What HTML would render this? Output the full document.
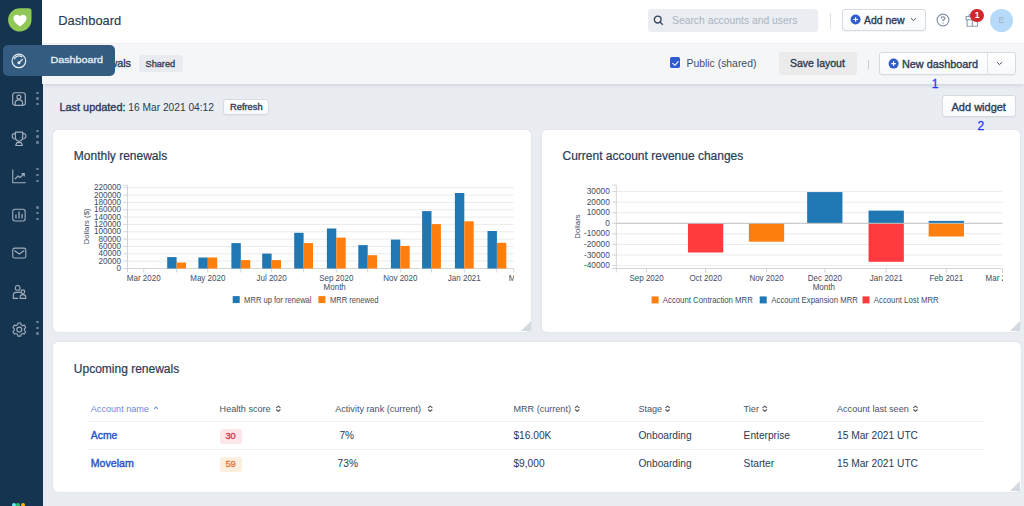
<!DOCTYPE html>
<html><head><meta charset="utf-8">
<style>
*{box-sizing:border-box;margin:0;padding:0}
html,body{width:1024px;height:506px;overflow:hidden;background:#e9ecf1;font-family:"Liberation Sans",sans-serif;color:#2d3b55}
.a{position:absolute;white-space:nowrap}
.sb{-webkit-text-stroke:0.35px currentColor}
#side{position:absolute;left:0;top:0;width:42.5px;height:506px;background:#15344f}
#hdr{position:absolute;left:42px;top:0;width:982px;height:43px;background:#fff}
#sub{position:absolute;left:42px;top:42.5px;width:982px;height:41px;background:#f5f6f8;border-top:1px solid #eef0f3;box-shadow:0 2px 4px -1px rgba(30,50,80,.16)}
.card{position:absolute;background:#fff;border-radius:5px;box-shadow:0 0 2px rgba(30,50,80,.10)}
.btn{position:absolute;background:linear-gradient(#fff,#f8f9fb);border:1px solid #d6dbe2;border-radius:3px;box-shadow:0 1px 1px rgba(0,0,0,.04)}
.dots{position:absolute;left:36.5px;width:2px}
.dots i{position:absolute;left:-0.2px;width:2.4px;height:2.4px;border-radius:50%;background:#6a7d93}
.ic{position:absolute}
.handle{position:absolute;width:0;height:0;border-style:solid;border-width:0 0 10.4px 10.4px;border-color:transparent transparent #d3d9e1 transparent}
</style></head>
<body>
<!-- sidebar -->
<div id="side">
  <svg class="ic" style="left:7.5px;top:8px" width="24" height="24" viewBox="0 0 24 24">
    <path d="M11.8 0.2H20.8Q23.5 0.2 23.5 2.9V11.8A11.7 11.7 0 1 1 11.8 0.2Z" fill="#90c858"/>
    <path d="M11.95 18.5C7.6 15.3 5.4 13.1 5.4 10.3C5.4 8.2 6.9 6.8 8.9 6.8C10.2 6.8 11.3 7.5 11.95 8.6C12.6 7.5 13.7 6.8 15 6.8C17 6.8 18.5 8.2 18.5 10.3C18.5 13.1 16.3 15.3 11.95 18.5Z" fill="#fff"/>
  </svg>
  <!-- contact -->
  <svg class="ic" style="left:12px;top:92px" width="14" height="14" viewBox="0 0 14 14" fill="none" stroke="#a3afbd" stroke-width="1.15">
    <rect x="0.7" y="0.7" width="12.6" height="12.6" rx="2.2"/>
    <circle cx="6.9" cy="5.1" r="2"/>
    <path d="M3.2 13.2V11.3Q3.2 7.9 6.9 7.9Q10.6 7.9 10.6 11.3V13.2"/>
  </svg>
  <div class="dots" style="top:91.5px"><i style="top:0"></i><i style="top:5.8px"></i><i style="top:11.6px"></i></div>
  <!-- trophy -->
  <svg class="ic" style="left:6px;top:126.6px" width="26" height="24" viewBox="0 0 26 24" fill="none" stroke="#a3afbd" stroke-width="1.15" stroke-linejoin="round">
    <path d="M9.4 5.1H16.7V10.2Q16.7 13.3 13.05 14.3Q9.4 13.3 9.4 10.2Z"/>
    <path d="M9.4 6.6Q6.3 6.4 6.2 8.9Q6.3 11.6 9.8 12.2M16.7 6.6Q19.8 6.4 19.9 8.9Q19.8 11.6 16.3 12.2"/>
    <path d="M13.05 14.3V15.6M10.8 15.6H15.3L16.4 18.5H9.7Z"/>
    <path d="M14.4 11.2L15.2 10.4" stroke-width="0.8"/>
  </svg>
  <div class="dots" style="top:129.7px"><i style="top:0"></i><i style="top:5.8px"></i><i style="top:11.6px"></i></div>
  <!-- line chart -->
  <svg class="ic" style="left:12px;top:168.5px" width="14" height="15" viewBox="0 0 14 15" fill="none" stroke="#a3afbd" stroke-width="1.1">
    <path d="M0.8 0.5V13.8H13.8"/>
    <path d="M3 10L6 7L8 8.5L12 5M9.5 4.6H12.3V7.4"/>
  </svg>
  <div class="dots" style="top:168.0px"><i style="top:0"></i><i style="top:5.8px"></i><i style="top:11.6px"></i></div>
  <!-- bar chart -->
  <svg class="ic" style="left:12px;top:207.5px" width="14" height="14" viewBox="0 0 14 14" fill="none" stroke="#a3afbd" stroke-width="1.1">
    <rect x="0.75" y="1.25" width="12.4" height="11.7" rx="2.2"/>
    <path d="M3.96 10.6V6.6M7.05 10.6V3.5M10.1 10.6V5.9" stroke="#8899ac" stroke-width="1.5"/>
  </svg>
  <div class="dots" style="top:206.2px"><i style="top:0"></i><i style="top:5.8px"></i><i style="top:11.6px"></i></div>
  <!-- mail -->
  <svg class="ic" style="left:11.5px;top:246.5px" width="15" height="12" viewBox="0 0 15 12" fill="none" stroke="#a3afbd" stroke-width="1.1">
    <rect x="0.75" y="1.15" width="13.1" height="9.8" rx="1.8"/>
    <path d="M2.3 3.5L7.3 7L12.3 3.5"/>
  </svg>
  <!-- users -->
  <svg class="ic" style="left:11.5px;top:284.6px" width="16" height="15" viewBox="0 0 16 15" fill="none" stroke="#a3afbd" stroke-width="1.1">
    <circle cx="5.65" cy="2.9" r="2.4"/>
    <path d="M6.2 13.4H1.3V10.2Q1.3 7.4 4 7.4H8.9"/>
    <circle cx="10.9" cy="6.7" r="1.8"/>
    <path d="M8.2 13.4V11.8Q8.2 9.6 10.9 9.6Q13.7 9.6 13.7 11.8V13.4Z"/>
  </svg>
  <!-- gear -->
  <svg class="ic" style="left:11.5px;top:321px" width="16" height="17" viewBox="0 0 16 17" fill="none" stroke="#a3afbd" stroke-width="1.1">
    <path d="M9.13 3.84 L8.69 2.05 L5.91 2.05 L5.47 3.84 L4.09 4.64 L2.32 4.12 L0.93 6.53 L2.26 7.80 L2.26 9.40 L0.93 10.67 L2.32 13.08 L4.09 12.56 L5.47 13.36 L5.91 15.15 L8.69 15.15 L9.13 13.36 L10.51 12.56 L12.28 13.08 L13.67 10.67 L12.34 9.40 L12.34 7.80 L13.67 6.53 L12.28 4.12 L10.51 4.64Z" stroke-linejoin="round"/>
    <circle cx="7.3" cy="8.6" r="2.5"/>
  </svg>
  <div class="dots" style="top:320.9px"><i style="top:0"></i><i style="top:5.8px"></i><i style="top:11.6px"></i></div>
  <div class="a" style="left:11.5px;top:503px;width:4px;height:4px;border-radius:2px;background:#5ef1f6"></div>
  <div class="a" style="left:16.3px;top:503px;width:4px;height:4px;border-radius:2px;background:#2fbf70"></div>
  <div class="a" style="left:20.8px;top:503px;width:4px;height:4px;border-radius:2px;background:#f7b500"></div>
</div>

<!-- header -->
<div id="hdr"></div>
<div class="a" style="left:58.2px;top:13.2px;font-size:12.9px;line-height:15px;color:#2b3a55;-webkit-text-stroke:0.15px currentColor">Dashboard</div>
<div class="a" style="left:648px;top:9px;width:170px;height:23px;background:#eaedf1;border-radius:3px"></div>
<svg class="ic" style="left:653px;top:15.3px" width="11" height="11" viewBox="0 0 11 11" fill="none" stroke="#34435c" stroke-width="1.3"><circle cx="4.7" cy="4.6" r="3.4"/><path d="M7.2 7.2L9.8 9.8"/></svg>
<div class="a" style="left:672px;top:15.4px;font-size:10.35px;line-height:12px;color:#aab4c1">Search accounts and users</div>
<div class="a" style="left:830px;top:13px;width:1px;height:16px;background:#dfe3e8"></div>
<div class="btn" style="left:842px;top:9px;width:84px;height:22px"></div>
<svg class="ic" style="left:849.5px;top:14.3px" width="11" height="11" viewBox="0 0 11 11"><circle cx="5.6" cy="5.5" r="5" fill="#2f5ccf"/><path d="M5.6 3.2V7.8M3.3 5.5H7.9" stroke="#fff" stroke-width="1.2"/></svg>
<div class="a sb" style="left:864px;top:14.5px;font-size:10.45px;line-height:12px;color:#2b3a55">Add new</div>
<svg class="ic" style="left:909.5px;top:17px" width="7" height="5" viewBox="0 0 7 5" fill="none" stroke="#46536a" stroke-width="1"><path d="M1 1.2L3.5 3.6L6 1.2"/></svg>
<svg class="ic" style="left:935.5px;top:13px" width="14" height="14" viewBox="0 0 14 14" fill="none" stroke="#8392a5" stroke-width="1.15"><circle cx="7" cy="7" r="5.9"/><path d="M5.2 5.5Q5.2 3.8 7 3.8Q8.8 3.8 8.8 5.3Q8.8 6.4 7 7.1V8.2" stroke-width="1.3"/><circle cx="7" cy="10.1" r="0.7" fill="#8392a5" stroke="none"/></svg>
<svg class="ic" style="left:964.5px;top:12.5px" width="15" height="15" viewBox="0 0 15 15" fill="none" stroke="#8d9bad" stroke-width="1.1"><rect x="1.1" y="3.6" width="12.4" height="3.2"/><path d="M2.1 6.8V13.3H12.5V6.8M7.3 3.6V13.3"/><path d="M7.3 3.6Q5 0.6 4 2Q3.5 3.6 7.3 3.6"/></svg>
<div class="a" style="left:970.3px;top:9px;width:13.4px;height:13px;border-radius:7px;background:#d0262c;color:#fff;font-size:8.5px;font-weight:700;line-height:13px;text-align:center">1</div>
<div class="a" style="left:990px;top:8.5px;width:23px;height:23px;border-radius:12px;background:#b6dbfa;color:#9fb2c6;font-size:9px;line-height:23px;text-align:center">E</div>

<!-- subheader -->
<div id="sub"></div>
<div class="a sb" style="left:0;width:131px;text-align:right;top:57px;font-size:10.8px;line-height:12px;color:#2b3a55">Key renewals</div>
<div class="a" style="left:138.5px;top:55px;width:44px;height:17px;background:#e8ebef;border-radius:3px"></div>
<div class="a sb" style="left:145.5px;top:59.1px;font-size:9.2px;line-height:10px;color:#3c485c;-webkit-text-stroke:0.4px currentColor">Shared</div>

<div class="a" style="left:670.1px;top:57.4px;width:10.3px;height:10.4px;border-radius:1.8px;background:#2f5bd0"></div>
<svg class="ic" style="left:670px;top:57.3px" width="11" height="11" viewBox="0 0 11 11" fill="none" stroke="#fff" stroke-width="1.1"><path d="M2.5 6.2L4.9 8.3L8.4 4.4"/></svg>
<div class="a" style="left:686.5px;top:57.8px;font-size:10.4px;line-height:12px;color:#3f4d63">Public (shared)</div>
<div class="a" style="left:778.5px;top:52px;width:78px;height:23px;background:#ebebec;border-radius:3px"></div>
<div class="a sb" style="left:790px;top:57px;font-size:10.5px;line-height:12px;color:#2b3a55">Save layout</div>
<div class="a" style="left:867.5px;top:60px;width:1px;height:9px;background:#c8ced6"></div>
<div class="btn" style="left:879px;top:52.2px;width:137px;height:22.4px"></div>
<div class="a" style="left:987.2px;top:53px;width:1px;height:21px;background:#dde1e7"></div>
<svg class="ic" style="left:887.5px;top:57.6px" width="11" height="11" viewBox="0 0 11 11"><circle cx="5.6" cy="5.6" r="5" fill="#2f5ccf"/><path d="M5.6 3.3V7.9M3.3 5.6H7.9" stroke="#fff" stroke-width="1.2"/></svg>
<div class="a sb" style="left:902px;top:57.5px;font-size:10.85px;line-height:12px;color:#2b3a55">New dashboard</div>
<svg class="ic" style="left:996.3px;top:61px" width="7" height="5" viewBox="0 0 7 5" fill="none" stroke="#46536a" stroke-width="1"><path d="M1 1.2L3.5 3.6L6 1.2"/></svg>

<!-- tooltip -->
<div class="a" style="left:3px;top:45px;width:112px;height:30.5px;border-radius:5px;background:#345c80"></div>
<svg class="ic" style="left:8px;top:50px" width="22" height="22" viewBox="0 0 22 22" fill="none" stroke="#e4e9ee" stroke-width="1.2"><circle cx="10.9" cy="10.9" r="6.8"/><path d="M6.1 9.2A5.1 5.1 0 0 1 14.2 7.1" stroke-width="1.3"/><path d="M10.9 12.8L14.8 9.1" stroke-width="1.3"/><circle cx="10.9" cy="12.8" r="1.5" fill="#e4e9ee" stroke="none"/></svg>
<div class="a sb" style="left:50.5px;top:52.9px;font-size:10.75px;line-height:12px;color:#e8edf2;transform:scaleY(0.87);transform-origin:0 10px">Dashboard</div>

<!-- toolbar -->
<div class="a" style="left:59.5px;top:100.8px;font-size:10.2px;line-height:12px;color:#2b3a55"><span class="sb" style="font-size:10.9px">Last updated:</span> 16 Mar 2021 04:12</div>
<div class="btn" style="left:222.5px;top:98.5px;width:46.5px;height:16px"></div>
<div class="a sb" style="left:230px;top:101.9px;font-size:9.3px;line-height:10px;color:#2b3a55">Refresh</div>
<div class="btn" style="left:942px;top:95.3px;width:74px;height:22px"></div>
<div class="a sb" style="left:951.5px;top:100.6px;font-size:11px;line-height:12px;color:#2b3a55">Add widget</div>

<!-- cards -->
<div class="card" style="left:53px;top:129.7px;width:478px;height:202.1px"></div>
<div class="handle" style="left:521px;top:321.2px"></div>
<div class="card" style="left:542.2px;top:129.7px;width:477.8px;height:202.1px"></div>
<div class="handle" style="left:1009.6px;top:321.2px"></div>
<div class="card" style="left:53px;top:342.4px;width:967.5px;height:149.4px"></div>
<div class="handle" style="left:1010.2px;top:481.3px"></div>

<div class="a" style="left:73.8px;top:149px;font-size:12px;line-height:14px;color:#2b3a55;-webkit-text-stroke:0.2px currentColor">Monthly renewals</div>
<div class="a" style="left:562.5px;top:149px;font-size:12px;line-height:14px;color:#2b3a55;-webkit-text-stroke:0.2px currentColor">Current account revenue changes</div>

<svg class="ic" style="left:0;top:0" width="1024" height="506" viewBox="0 0 1024 506">
<line x1="123.3" x2="127.5" y1="268.50" y2="268.50" stroke="#c9c9c9" stroke-width="0.8"/>
<text x="121" y="271.10" text-anchor="end" font-size="8.15" fill="#3f4c63">0</text>
<line x1="127.5" x2="513.7" y1="261.15" y2="261.15" stroke="#ebebeb" stroke-width="1"/>
<line x1="123.3" x2="127.5" y1="261.15" y2="261.15" stroke="#c9c9c9" stroke-width="0.8"/>
<text x="121" y="263.75" text-anchor="end" font-size="8.15" fill="#3f4c63">20000</text>
<line x1="127.5" x2="513.7" y1="253.81" y2="253.81" stroke="#ebebeb" stroke-width="1"/>
<line x1="123.3" x2="127.5" y1="253.81" y2="253.81" stroke="#c9c9c9" stroke-width="0.8"/>
<text x="121" y="256.41" text-anchor="end" font-size="8.15" fill="#3f4c63">40000</text>
<line x1="127.5" x2="513.7" y1="246.47" y2="246.47" stroke="#ebebeb" stroke-width="1"/>
<line x1="123.3" x2="127.5" y1="246.47" y2="246.47" stroke="#c9c9c9" stroke-width="0.8"/>
<text x="121" y="249.06" text-anchor="end" font-size="8.15" fill="#3f4c63">60000</text>
<line x1="127.5" x2="513.7" y1="239.12" y2="239.12" stroke="#ebebeb" stroke-width="1"/>
<line x1="123.3" x2="127.5" y1="239.12" y2="239.12" stroke="#c9c9c9" stroke-width="0.8"/>
<text x="121" y="241.72" text-anchor="end" font-size="8.15" fill="#3f4c63">80000</text>
<line x1="127.5" x2="513.7" y1="231.78" y2="231.78" stroke="#ebebeb" stroke-width="1"/>
<line x1="123.3" x2="127.5" y1="231.78" y2="231.78" stroke="#c9c9c9" stroke-width="0.8"/>
<text x="121" y="234.38" text-anchor="end" font-size="8.15" fill="#3f4c63">100000</text>
<line x1="127.5" x2="513.7" y1="224.43" y2="224.43" stroke="#ebebeb" stroke-width="1"/>
<line x1="123.3" x2="127.5" y1="224.43" y2="224.43" stroke="#c9c9c9" stroke-width="0.8"/>
<text x="121" y="227.03" text-anchor="end" font-size="8.15" fill="#3f4c63">120000</text>
<line x1="127.5" x2="513.7" y1="217.09" y2="217.09" stroke="#ebebeb" stroke-width="1"/>
<line x1="123.3" x2="127.5" y1="217.09" y2="217.09" stroke="#c9c9c9" stroke-width="0.8"/>
<text x="121" y="219.69" text-anchor="end" font-size="8.15" fill="#3f4c63">140000</text>
<line x1="127.5" x2="513.7" y1="209.74" y2="209.74" stroke="#ebebeb" stroke-width="1"/>
<line x1="123.3" x2="127.5" y1="209.74" y2="209.74" stroke="#c9c9c9" stroke-width="0.8"/>
<text x="121" y="212.34" text-anchor="end" font-size="8.15" fill="#3f4c63">160000</text>
<line x1="127.5" x2="513.7" y1="202.39" y2="202.39" stroke="#ebebeb" stroke-width="1"/>
<line x1="123.3" x2="127.5" y1="202.39" y2="202.39" stroke="#c9c9c9" stroke-width="0.8"/>
<text x="121" y="204.99" text-anchor="end" font-size="8.15" fill="#3f4c63">180000</text>
<line x1="127.5" x2="513.7" y1="195.05" y2="195.05" stroke="#ebebeb" stroke-width="1"/>
<line x1="123.3" x2="127.5" y1="195.05" y2="195.05" stroke="#c9c9c9" stroke-width="0.8"/>
<text x="121" y="197.65" text-anchor="end" font-size="8.15" fill="#3f4c63">200000</text>
<line x1="127.5" x2="513.7" y1="187.70" y2="187.70" stroke="#ebebeb" stroke-width="1"/>
<line x1="123.3" x2="127.5" y1="187.70" y2="187.70" stroke="#c9c9c9" stroke-width="0.8"/>
<text x="121" y="190.30" text-anchor="end" font-size="8.15" fill="#3f4c63">220000</text>
<path d="M123.3 185.3H127.5V268.5" fill="none" stroke="#c9c9c9" stroke-width="0.8"/>
<path d="M127.5 272.5V268.5H513.7V272.5" fill="none" stroke="#c9c9c9" stroke-width="0.8"/>
<line x1="143.70" x2="143.70" y1="268.5" y2="272.5" stroke="#c9c9c9" stroke-width="0.8"/>
<line x1="176.60" x2="176.60" y1="268.5" y2="272.5" stroke="#c9c9c9" stroke-width="0.8"/>
<rect x="167.20" y="257.1" width="9.4" height="11.40" fill="#1f77b4"/>
<rect x="176.60" y="262.5" width="9.4" height="6.00" fill="#ff7f0e"/>
<line x1="207.80" x2="207.80" y1="268.5" y2="272.5" stroke="#c9c9c9" stroke-width="0.8"/>
<rect x="198.40" y="257.5" width="9.4" height="11.00" fill="#1f77b4"/>
<rect x="207.80" y="257.5" width="9.4" height="11.00" fill="#ff7f0e"/>
<line x1="240.80" x2="240.80" y1="268.5" y2="272.5" stroke="#c9c9c9" stroke-width="0.8"/>
<rect x="231.40" y="243.1" width="9.4" height="25.40" fill="#1f77b4"/>
<rect x="240.80" y="260.1" width="9.4" height="8.40" fill="#ff7f0e"/>
<line x1="271.60" x2="271.60" y1="268.5" y2="272.5" stroke="#c9c9c9" stroke-width="0.8"/>
<rect x="262.20" y="253.6" width="9.4" height="14.90" fill="#1f77b4"/>
<rect x="271.60" y="260.1" width="9.4" height="8.40" fill="#ff7f0e"/>
<line x1="303.60" x2="303.60" y1="268.5" y2="272.5" stroke="#c9c9c9" stroke-width="0.8"/>
<rect x="294.20" y="232.8" width="9.4" height="35.70" fill="#1f77b4"/>
<rect x="303.60" y="243.1" width="9.4" height="25.40" fill="#ff7f0e"/>
<line x1="336.30" x2="336.30" y1="268.5" y2="272.5" stroke="#c9c9c9" stroke-width="0.8"/>
<rect x="326.90" y="228.5" width="9.4" height="40.00" fill="#1f77b4"/>
<rect x="336.30" y="237.6" width="9.4" height="30.90" fill="#ff7f0e"/>
<line x1="367.70" x2="367.70" y1="268.5" y2="272.5" stroke="#c9c9c9" stroke-width="0.8"/>
<rect x="358.30" y="245.1" width="9.4" height="23.40" fill="#1f77b4"/>
<rect x="367.70" y="255.2" width="9.4" height="13.30" fill="#ff7f0e"/>
<line x1="400.30" x2="400.30" y1="268.5" y2="272.5" stroke="#c9c9c9" stroke-width="0.8"/>
<rect x="390.90" y="239.6" width="9.4" height="28.90" fill="#1f77b4"/>
<rect x="400.30" y="245.9" width="9.4" height="22.60" fill="#ff7f0e"/>
<line x1="431.50" x2="431.50" y1="268.5" y2="272.5" stroke="#c9c9c9" stroke-width="0.8"/>
<rect x="422.10" y="211.1" width="9.4" height="57.40" fill="#1f77b4"/>
<rect x="431.50" y="224.1" width="9.4" height="44.40" fill="#ff7f0e"/>
<line x1="464.30" x2="464.30" y1="268.5" y2="272.5" stroke="#c9c9c9" stroke-width="0.8"/>
<rect x="454.90" y="193" width="9.4" height="75.50" fill="#1f77b4"/>
<rect x="464.30" y="221.3" width="9.4" height="47.20" fill="#ff7f0e"/>
<line x1="496.90" x2="496.90" y1="268.5" y2="272.5" stroke="#c9c9c9" stroke-width="0.8"/>
<rect x="487.50" y="231" width="9.4" height="37.50" fill="#1f77b4"/>
<rect x="496.90" y="242.8" width="9.4" height="25.70" fill="#ff7f0e"/>
<defs><clipPath id="c1"><rect x="100" y="150" width="414" height="150"/></clipPath><clipPath id="c2"><rect x="560" y="150" width="443" height="150"/></clipPath></defs>
<g clip-path="url(#c1)">
<text transform="translate(143.70 280.7) scale(1 1.2)" text-anchor="middle" font-size="8" fill="#3f4c63">Mar 2020</text>
<text transform="translate(207.80 280.7) scale(1 1.2)" text-anchor="middle" font-size="8" fill="#3f4c63">May 2020</text>
<text transform="translate(271.60 280.7) scale(1 1.2)" text-anchor="middle" font-size="8" fill="#3f4c63">Jul 2020</text>
<text transform="translate(336.30 280.7) scale(1 1.2)" text-anchor="middle" font-size="8" fill="#3f4c63">Sep 2020</text>
<text transform="translate(400.30 280.7) scale(1 1.2)" text-anchor="middle" font-size="8" fill="#3f4c63">Nov 2020</text>
<text transform="translate(464.30 280.7) scale(1 1.2)" text-anchor="middle" font-size="8" fill="#3f4c63">Jan 2021</text>
<text transform="translate(525.60 280.7) scale(1 1.2)" text-anchor="middle" font-size="8" fill="#3f4c63">Mar 2021</text>
</g>
<text transform="translate(334.7 290) scale(1 1.04)" text-anchor="middle" font-size="8" fill="#3f4c63">Month</text>
<text transform="translate(88.7 226.4) rotate(-90)" text-anchor="middle" font-size="7.8" fill="#3f4c63">Dollars ($)</text>
<rect x="232.7" y="296.1" width="7" height="7" fill="#1f77b4"/>
<text transform="translate(244.1 302.8) scale(1 1.1)" font-size="7.6" fill="#3f4c63">MRR up for renewal</text>
<rect x="318.4" y="296.1" width="7" height="7" fill="#ff7f0e"/>
<text transform="translate(329.9 302.8) scale(1 1.1)" font-size="7.6" fill="#3f4c63">MRR renewed</text>
<line x1="616.3" x2="1002.5" y1="265.58" y2="265.58" stroke="#ebebeb" stroke-width="1"/>
<line x1="612.1" x2="616.3" y1="265.58" y2="265.58" stroke="#c9c9c9" stroke-width="0.8"/>
<text x="609.8" y="268.18" text-anchor="end" font-size="8.3" fill="#3f4c63">-40000</text>
<line x1="616.3" x2="1002.5" y1="255.01" y2="255.01" stroke="#ebebeb" stroke-width="1"/>
<line x1="612.1" x2="616.3" y1="255.01" y2="255.01" stroke="#c9c9c9" stroke-width="0.8"/>
<text x="609.8" y="257.61" text-anchor="end" font-size="8.3" fill="#3f4c63">-30000</text>
<line x1="616.3" x2="1002.5" y1="244.44" y2="244.44" stroke="#ebebeb" stroke-width="1"/>
<line x1="612.1" x2="616.3" y1="244.44" y2="244.44" stroke="#c9c9c9" stroke-width="0.8"/>
<text x="609.8" y="247.04" text-anchor="end" font-size="8.3" fill="#3f4c63">-20000</text>
<line x1="616.3" x2="1002.5" y1="233.87" y2="233.87" stroke="#ebebeb" stroke-width="1"/>
<line x1="612.1" x2="616.3" y1="233.87" y2="233.87" stroke="#c9c9c9" stroke-width="0.8"/>
<text x="609.8" y="236.47" text-anchor="end" font-size="8.3" fill="#3f4c63">-10000</text>
<line x1="612.1" x2="616.3" y1="223.30" y2="223.30" stroke="#c9c9c9" stroke-width="0.8"/>
<text x="609.8" y="225.90" text-anchor="end" font-size="8.3" fill="#3f4c63">0</text>
<line x1="616.3" x2="1002.5" y1="212.73" y2="212.73" stroke="#ebebeb" stroke-width="1"/>
<line x1="612.1" x2="616.3" y1="212.73" y2="212.73" stroke="#c9c9c9" stroke-width="0.8"/>
<text x="609.8" y="215.33" text-anchor="end" font-size="8.3" fill="#3f4c63">10000</text>
<line x1="616.3" x2="1002.5" y1="202.16" y2="202.16" stroke="#ebebeb" stroke-width="1"/>
<line x1="612.1" x2="616.3" y1="202.16" y2="202.16" stroke="#c9c9c9" stroke-width="0.8"/>
<text x="609.8" y="204.76" text-anchor="end" font-size="8.3" fill="#3f4c63">20000</text>
<line x1="616.3" x2="1002.5" y1="191.59" y2="191.59" stroke="#ebebeb" stroke-width="1"/>
<line x1="612.1" x2="616.3" y1="191.59" y2="191.59" stroke="#c9c9c9" stroke-width="0.8"/>
<text x="609.8" y="194.19" text-anchor="end" font-size="8.3" fill="#3f4c63">30000</text>
<path d="M612.1 185.1H616.3V272.5" fill="none" stroke="#c9c9c9" stroke-width="0.8"/>
<path d="M612.1 268.5H1002.5V272.5" fill="none" stroke="#c9c9c9" stroke-width="0.8"/>
<line x1="646.6" x2="646.6" y1="268.5" y2="272.5" stroke="#c9c9c9" stroke-width="0.8"/>
<line x1="705.6" x2="705.6" y1="268.5" y2="272.5" stroke="#c9c9c9" stroke-width="0.8"/>
<line x1="766.5" x2="766.5" y1="268.5" y2="272.5" stroke="#c9c9c9" stroke-width="0.8"/>
<line x1="824.8" x2="824.8" y1="268.5" y2="272.5" stroke="#c9c9c9" stroke-width="0.8"/>
<line x1="886.2" x2="886.2" y1="268.5" y2="272.5" stroke="#c9c9c9" stroke-width="0.8"/>
<line x1="946.3" x2="946.3" y1="268.5" y2="272.5" stroke="#c9c9c9" stroke-width="0.8"/>
<rect x="687.95" y="223.3" width="35.3" height="29.20" fill="#ff3b3f"/>
<rect x="748.85" y="223.3" width="35.3" height="18.40" fill="#ff7f0e"/>
<rect x="807.15" y="192.1" width="35.3" height="31.20" fill="#1f77b4"/>
<rect x="868.55" y="210.6" width="35.3" height="12.70" fill="#1f77b4"/>
<rect x="868.55" y="223.3" width="35.3" height="38.50" fill="#ff3b3f"/>
<rect x="928.65" y="220.9" width="35.3" height="2.40" fill="#1f77b4"/>
<rect x="928.65" y="223.3" width="35.3" height="13.20" fill="#ff7f0e"/>
<line x1="616.3" x2="1002.5" y1="223.3" y2="223.3" stroke="#bdbdbd" stroke-width="1"/>
<g clip-path="url(#c2)">
<text transform="translate(646.6 280.8) scale(1 1.2)" text-anchor="middle" font-size="8" fill="#3f4c63">Sep 2020</text>
<text transform="translate(705.6 280.8) scale(1 1.2)" text-anchor="middle" font-size="8" fill="#3f4c63">Oct 2020</text>
<text transform="translate(766.5 280.8) scale(1 1.2)" text-anchor="middle" font-size="8" fill="#3f4c63">Nov 2020</text>
<text transform="translate(824.8 280.8) scale(1 1.2)" text-anchor="middle" font-size="8" fill="#3f4c63">Dec 2020</text>
<text transform="translate(886.2 280.8) scale(1 1.2)" text-anchor="middle" font-size="8" fill="#3f4c63">Jan 2021</text>
<text transform="translate(946.3 280.8) scale(1 1.2)" text-anchor="middle" font-size="8" fill="#3f4c63">Feb 2021</text>
<text transform="translate(1002.4 280.8) scale(1 1.2)" text-anchor="middle" font-size="8" fill="#3f4c63">Mar 2021</text>
</g>
<text transform="translate(823.8 290) scale(1 1.04)" text-anchor="middle" font-size="8" fill="#3f4c63">Month</text>
<text transform="translate(579.9 226.5) rotate(-90)" text-anchor="middle" font-size="7.8" fill="#3f4c63">Dollars</text>
<rect x="651.6" y="296.4" width="7" height="7" fill="#ff7f0e"/>
<text transform="translate(662.8 302.9) scale(1 1.1)" font-size="7.8" fill="#3f4c63">Account Contraction MRR</text>
<rect x="759.7" y="296.4" width="7" height="7" fill="#1f77b4"/>
<text transform="translate(771.3 302.9) scale(1 1.1)" font-size="7.8" fill="#3f4c63">Account Expansion MRR</text>
<rect x="862.5" y="296.4" width="7" height="7" fill="#ff3b3f"/>
<text transform="translate(873.8 302.9) scale(1 1.1)" font-size="7.8" fill="#3f4c63">Account Lost MRR</text>
</svg>


<div class="a" style="left:73.8px;top:362px;font-size:12px;line-height:14px;color:#2b3a55;-webkit-text-stroke:0.2px currentColor">Upcoming renewals</div>
<div class="a" style="left:90.8px;top:403.7px;font-size:9.1px;line-height:11px;color:#6a8bdb">Account name</div>
<div class="a" style="left:219.6px;top:403.7px;font-size:9.1px;line-height:11px;color:#45536a">Health score</div>
<div class="a" style="left:335.2px;top:403.7px;font-size:9.1px;line-height:11px;color:#45536a">Activity rank (current)</div>
<div class="a" style="left:513.4px;top:403.7px;font-size:9.1px;line-height:11px;color:#45536a">MRR (current)</div>
<div class="a" style="left:638.4px;top:403.7px;font-size:9.1px;line-height:11px;color:#45536a">Stage</div>
<div class="a" style="left:743.6px;top:403.7px;font-size:9.1px;line-height:11px;color:#45536a">Tier</div>
<div class="a" style="left:837px;top:403.7px;font-size:9.1px;line-height:11px;color:#45536a">Account last seen</div>
<div class="a" style="left:87.3px;top:420.9px;width:898px;height:1px;background:#eef0f3"></div>
<div class="a" style="left:87.3px;top:449px;width:898px;height:1px;background:#eef0f3"></div>
<div class="a sb" style="left:90.8px;top:430px;font-size:10.4px;line-height:12px;color:#2a57c8;-webkit-text-stroke:0.42px currentColor">Acme</div>
<div class="a sb" style="left:90.8px;top:457.1px;font-size:10.6px;line-height:12px;color:#2a57c8;-webkit-text-stroke:0.42px currentColor">Movelam</div>
<svg class="ic" style="left:0;top:400px" width="1024" height="16" viewBox="0 400 1024 16" fill="none" stroke="#7b97dd" stroke-width="1.1" stroke-linecap="round" stroke-linejoin="round"><path d="M154.50 408.6L156.10 407L157.70 408.6"/></svg>
<svg class="ic" style="left:0;top:400px" width="1024" height="16" viewBox="0 400 1024 16" fill="none" stroke="#505762" stroke-width="1.15" stroke-linecap="round" stroke-linejoin="round"><path d="M276.50 407.6L278.30 406.1L280.10 407.6M276.50 409.8L278.30 411.3L280.10 409.8M428.40 407.6L430.20 406.1L432.00 407.6M428.40 409.8L430.20 411.3L432.00 409.8M575.40 407.6L577.20 406.1L579.00 407.6M575.40 409.8L577.20 411.3L579.00 409.8M665.80 407.6L667.60 406.1L669.40 407.6M665.80 409.8L667.60 411.3L669.40 409.8M763.00 407.6L764.80 406.1L766.60 407.6M763.00 409.8L764.80 411.3L766.60 409.8M913.70 407.6L915.50 406.1L917.30 407.6M913.70 409.8L915.50 411.3L917.30 409.8"/></svg>
<div class="a" style="left:219.6px;top:429px;width:22px;height:15px;border-radius:3px;background:#fde6ea"></div>
<div class="a sb" style="left:219.6px;top:431.2px;width:22px;text-align:center;font-size:9.3px;line-height:11px;color:#d8344c">30</div>
<div class="a" style="left:219.6px;top:456.5px;width:22px;height:15px;border-radius:3px;background:#fdefdf"></div>
<div class="a sb" style="left:219.6px;top:458.7px;width:22px;text-align:center;font-size:9.3px;line-height:11px;color:#e5773a">59</div>
<div class="a" style="left:339.4px;top:430.4px;font-size:10.2px;line-height:12px;color:#2b3a55">7%</div>
<div class="a" style="left:513.4px;top:430.4px;font-size:10.2px;line-height:12px;color:#2b3a55">$16.00K</div>
<div class="a" style="left:638.4px;top:430.4px;font-size:10.2px;line-height:12px;color:#2b3a55">Onboarding</div>
<div class="a" style="left:743.6px;top:430.4px;font-size:10.2px;line-height:12px;color:#2b3a55">Enterprise</div>
<div class="a" style="left:837px;top:430.4px;font-size:10.2px;line-height:12px;color:#2b3a55">15 Mar 2021 UTC</div>
<div class="a" style="left:337.6px;top:457.9px;font-size:10.2px;line-height:12px;color:#2b3a55">73%</div>
<div class="a" style="left:513.4px;top:457.9px;font-size:10.2px;line-height:12px;color:#2b3a55">$9,000</div>
<div class="a" style="left:638.4px;top:457.9px;font-size:10.2px;line-height:12px;color:#2b3a55">Onboarding</div>
<div class="a" style="left:743.6px;top:457.9px;font-size:10.2px;line-height:12px;color:#2b3a55">Starter</div>
<div class="a" style="left:837px;top:457.9px;font-size:10.2px;line-height:12px;color:#2b3a55">15 Mar 2021 UTC</div>
<div class="a" style="left:931.7px;top:76.5px;font-size:12px;line-height:14px;color:#2637ff;-webkit-text-stroke:0.3px currentColor">1</div>
<div class="a" style="left:977.5px;top:118.5px;font-size:12px;line-height:14px;color:#2637ff;-webkit-text-stroke:0.3px currentColor">2</div>
</body></html>
